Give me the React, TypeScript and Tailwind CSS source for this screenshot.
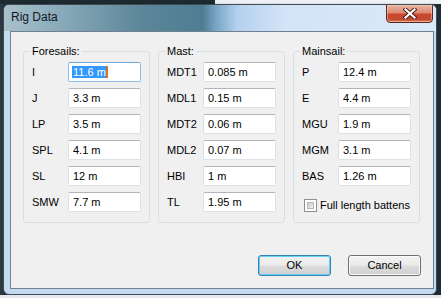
import React from 'react';

type Field = { label: string; value: string };

const foresails: Field[] = [
  { label: 'I', value: '11.6 m' },
  { label: 'J', value: '3.3 m' },
  { label: 'LP', value: '3.5 m' },
  { label: 'SPL', value: '4.1 m' },
  { label: 'SL', value: '12 m' },
  { label: 'SMW', value: '7.7 m' },
];

const mast: Field[] = [
  { label: 'MDT1', value: '0.085 m' },
  { label: 'MDL1', value: '0.15 m' },
  { label: 'MDT2', value: '0.06 m' },
  { label: 'MDL2', value: '0.07 m' },
  { label: 'HBI', value: '1 m' },
  { label: 'TL', value: '1.95 m' },
];

const mainsail: Field[] = [
  { label: 'P', value: '12.4 m' },
  { label: 'E', value: '4.4 m' },
  { label: 'MGU', value: '1.9 m' },
  { label: 'MGM', value: '3.1 m' },
  { label: 'BAS', value: '1.26 m' },
];

const TextBox: React.FC<{ value: string; focused?: boolean }> = ({ value, focused }) => {
  if (focused) {
    return (
      <div className="w-[73px] h-[20px] flex items-center pl-[3px] bg-white rounded-[2px] border border-[#8dbde9] border-t-[#6fa7dc]">
        <span className="bg-[#3399ff] text-white leading-[12px] h-[12px] pl-[1px]">{value}</span>
        <span className="w-[2px] h-[12px] bg-[#d8741c]" />
      </div>
    );
  }
  return (
    <div className="w-[73px] h-[20px] flex items-center pl-[4px] bg-white rounded-[2px] border border-[#dde1e7] border-t-[#b3b5ba]">
      {value}
    </div>
  );
};

const Group: React.FC<{ title: string; fields: Field[]; focusFirst?: boolean; children?: React.ReactNode }> = ({
  title,
  fields,
  focusFirst,
  children,
}) => (
  <fieldset className="w-[127px] rounded-[3px] border border-[#d5dfe5] pb-[10px]">
    <legend className="ml-[6px] px-[2px] leading-[13px]">{title}</legend>
    <div className="flex flex-col gap-[6px] pl-[8px] pt-[4px]">
      {fields.map((f, i) => (
        <div key={f.label} className="flex items-center h-[20px]">
          <span className="w-[36px]">{f.label}</span>
          <TextBox value={f.value} focused={focusFirst && i === 0} />
        </div>
      ))}
      {children}
    </div>
  </fieldset>
);

const btn =
  'w-[73px] h-[21px] flex items-center justify-center rounded-[3px] border bg-[linear-gradient(180deg,#f2f2f2_0%,#ebebeb_48%,#dddddd_52%,#cfcfcf_100%)]';

export default function App() {
  return (
    <div
      className="w-[441px] h-[298px] flex flex-col bg-[#24323a] text-[11px] text-black overflow-hidden"
      style={{ fontFamily: '"Liberation Sans", Arial, sans-serif' }}
    >
      {/* desktop behind the dialog */}
      <div className="h-[4px] flex">
        <div className="w-[215px] bg-[#1d2a30]" />
        <div className="flex-1 bg-[#eef2f6]" />
      </div>

      <div className="flex h-[291px]">
        <div className="w-[3px] bg-[#2c3a40]" />
        {/* window */}
        <div className="w-[434px] h-[291px] flex flex-col rounded-[6px] border border-[#404b53] bg-[#c4daf0] shadow-[1px_1px_3px_rgba(0,0,0,0.5)] overflow-hidden">
          <div className="h-[26px] flex items-start bg-[linear-gradient(90deg,#a9c0cc_0%,#86a8b8_14%,#5c8699_32%,#4e7d92_46%,#79a4c4_49%,#b4d1ee_54%,#d3e4f7_65%,#dbe9f8_100%)]">
            <span className="pl-[7px] pt-[5px] text-[12px] leading-[15px] text-[#101820]">Rig Data</span>
            <div className="ml-auto mr-[3px] -mt-px w-[47px] h-[19px] rounded-b-[4px] border border-[#5a2a22] flex items-center justify-center bg-[linear-gradient(180deg,#e9b3a4_0%,#dc8b74_45%,#c9482c_55%,#c24a30_85%,#d88a68_100%)] shadow-[inset_0_0_0_1px_rgba(255,220,200,0.45)]">
              <svg width="14" height="11" viewBox="0 0 14 11">
                <path d="M2.5 1.5 L11.5 9.5 M11.5 1.5 L2.5 9.5" stroke="#4a1a14" strokeWidth="4" strokeLinecap="square" />
                <path d="M2.5 1.5 L11.5 9.5 M11.5 1.5 L2.5 9.5" stroke="#ffffff" strokeWidth="2.2" strokeLinecap="square" />
              </svg>
            </div>
          </div>

          {/* client area */}
          <div className="ml-[6px] mr-[2px] mb-[5px] flex-1 flex flex-col border border-[#6f8091] bg-[#f0f0f0]">
            <div className="flex gap-[8px] pl-[12px] pt-[13px]">
              <Group title="Foresails:" fields={foresails} focusFirst />
              <Group title="Mast:" fields={mast} />
              <Group title="Mainsail:" fields={mainsail}>
                <div className="flex items-center gap-[3px] ml-[2px] mt-[6px] h-[14px]">
                  <div className="w-[13px] h-[13px] border border-[#8e8f8f] bg-white p-[2px]">
                    <div className="w-full h-full border border-[#b4b8bd] bg-[linear-gradient(135deg,#c9ccd0_0%,#eeeeef_100%)]" />
                  </div>
                  <span>Full length battens</span>
                </div>
              </Group>
            </div>

            <div className="mt-auto flex justify-end gap-[17px] pr-[12px] pb-[12px]">
              <div className={`${btn} border-[#3c7fb1] shadow-[inset_0_0_0_1px_#62d3f7]`}>OK</div>
              <div className={`${btn} border-[#707070] shadow-[inset_0_0_0_1px_#fbfbfb]`}>Cancel</div>
            </div>
          </div>
        </div>
        <div className="flex-1 bg-[#1e2c3a]" />
      </div>

      <div className="flex-1 bg-[#e6eaee]" />
    </div>
  );
}
